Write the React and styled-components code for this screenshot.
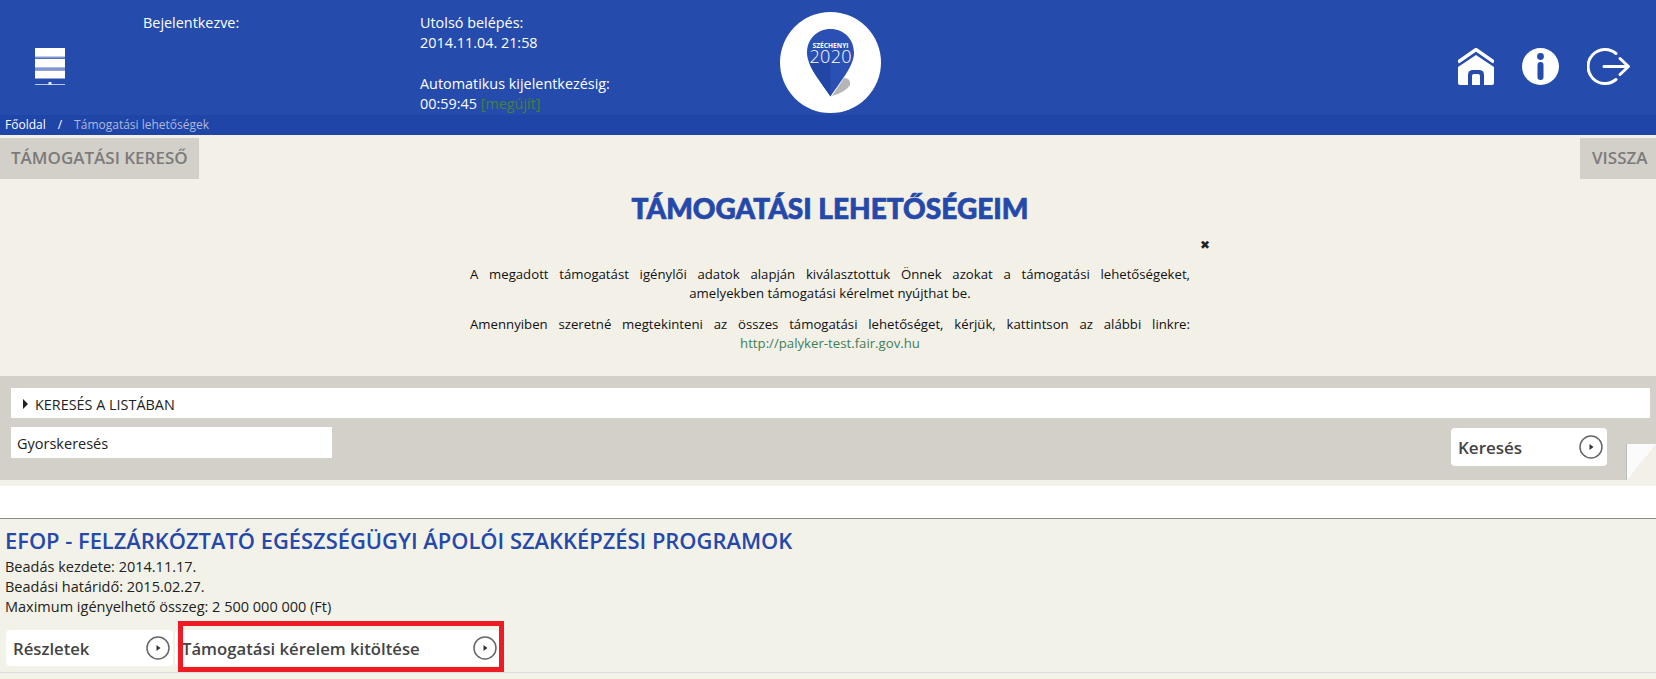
import styled, { createGlobalStyle } from "styled-components";

const GlobalStyle = createGlobalStyle`
  html, body {
    margin: 0;
    padding: 0;
    background: #f3f2e8;
    font-family: "Open Sans", "Liberation Sans", sans-serif;
    overflow: hidden;
  }
`;

const ArrowCircle = () => (
  <ArrowSvg viewBox="0 0 24 24">
    <circle cx="12" cy="12" r="11" fill="#fff" stroke="#666" strokeWidth="1.5" />
    <path d="M10.5 9 L14.5 12 L10.5 15 Z" fill="#333" />
  </ArrowSvg>
);

const MenuIcon = () => (
  <svg width="30" height="37" viewBox="0 0 30 37">
    <rect x="0" y="8" width="30" height="2.5" fill="#7f96d0" />
    <rect x="0" y="19.5" width="30" height="2.5" fill="#7f96d0" />
    <rect x="0" y="0" width="30" height="8.5" fill="#fff" />
    <rect x="0" y="11" width="30" height="8.5" fill="#fff" />
    <rect x="0" y="22.5" width="30" height="8" fill="#fff" />
    <rect x="0" y="36" width="30" height="1" fill="#b9c6e6" />
    <rect x="13.5" y="34" width="3" height="3" fill="#e6ebf7" />
  </svg>
);

const Logo = () => (
  <svg width="101" height="101" viewBox="0 0 101 101">
    <circle cx="50.5" cy="50.5" r="50.5" fill="#fff" />
    <path d="M52 84 L64 66 Q71 66 70 73 Q66 80 52 84 Z" fill="#b5b5b5" />
    <path d="M50.5 17 C37 17 27 27 27 41 C27 54 41 70 50.5 84.5 C60 70 74 54 74 41 C74 27 64 17 50.5 17 Z" fill="#2a50b4" />
    <path d="M50.5 50 L50.5 84.5 C41 70 32 60 29 50 Z" fill="#2146a6" />
    <text x="50.5" y="35.5" textAnchor="middle" fontFamily="Open Sans" fontWeight="700" fontSize="6.6" textLength="36" fill="#fff">SZÉCHENYI</text>
    <text x="50.5" y="51" textAnchor="middle" fontFamily="Open Sans" fontWeight="300" fontSize="18" textLength="42" fill="#fff">2020</text>
  </svg>
);

const HomeIcon = () => (
  <svg width="36" height="37" viewBox="0 0 36 37">
    <path d="M0 14 L18 1.5 L36 14" fill="none" stroke="#fff" strokeWidth="3.4" />
    <path d="M18 7 L36 19 V35 Q36 37 34 37 H26 V27 Q26 22 21 22 H15 Q10 22 10 27 V37 H2 Q0 37 0 35 V19 Z" fill="#fff" />
    <path d="M14 37 V28 Q14 26 16 26 H20 Q22 26 22 28 V37 Z" fill="#fff" />
  </svg>
);

const InfoIcon = () => (
  <svg width="37" height="37" viewBox="0 0 37 37">
    <circle cx="18.5" cy="18.5" r="18.5" fill="#fff" />
    <circle cx="18.5" cy="8.5" r="3.4" fill="#254bac" />
    <rect x="15.5" y="14" width="6" height="18" rx="3" fill="#254bac" />
  </svg>
);

const ExitIcon = () => (
  <svg width="44" height="37" viewBox="0 0 44 37" fill="none" stroke="#fff" strokeWidth="3">
    <path d="M29 5.5 A17 17 0 1 0 29 31.5" strokeLinecap="round" />
    <path d="M17 18.5 H41 M33 10.5 L41.5 18.5 L33 26.5" strokeLinecap="round" strokeLinejoin="round" />
  </svg>
);

const App = () => {
  return (
    <>
      <GlobalStyle />
      <Page>
        <Header>
          <MenuCell><MenuIcon /></MenuCell>
          <LoginCell>Bejelentkezve:</LoginCell>
          <SessionCell>
            <div>Utolsó belépés:</div>
            <div>2014.11.04. 21:58</div>
            <Gap />
            <div>Automatikus kijelentkezésig:</div>
            <div>00:59:45 <Renew>[megújít]</Renew></div>
          </SessionCell>
          <LogoCell><Logo /></LogoCell>
          <Actions>
            <HomeIcon />
            <InfoIcon />
            <ExitIcon />
          </Actions>
        </Header>
        <Breadcrumb>
          <CrumbLink>Főoldal</CrumbLink>
          <CrumbSep>/</CrumbSep>
          <CrumbCurrent>Támogatási lehetőségek</CrumbCurrent>
        </Breadcrumb>

        <Intro>
          <Tabs>
            <Tab>TÁMOGATÁSI KERESŐ</Tab>
            <Tab $small>VISSZA</Tab>
          </Tabs>
          <Heading>TÁMOGATÁSI LEHETŐSÉGEIM</Heading>
          <Notice>
            <Close>✖</Close>
            <NoticeLine $full>A megadott támogatást igénylői adatok alapján kiválasztottuk Önnek azokat a támogatási lehetőségeket,</NoticeLine>
            <NoticeLine>amelyekben támogatási kérelmet nyújthat be.</NoticeLine>
            <NoticeLine $full $spaced>Amennyiben szeretné megtekinteni az összes támogatási lehetőséget, kérjük, kattintson az alábbi linkre:</NoticeLine>
            <NoticeLine><NoticeLink>http://palyker-test.fair.gov.hu</NoticeLink></NoticeLine>
          </Notice>
        </Intro>

        <SearchPanel>
          <SearchToggle><Triangle />KERESÉS A LISTÁBAN</SearchToggle>
          <SearchRow>
            <QuickSearch>Gyorskeresés</QuickSearch>
            <SearchButton>Keresés<ArrowCircle /></SearchButton>
          </SearchRow>
          <Fold />
        </SearchPanel>
        <WhiteStrip />

        <Result>
          <ResultTitle>EFOP - FELZÁRKÓZTATÓ EGÉSZSÉGÜGYI ÁPOLÓI SZAKKÉPZÉSI PROGRAMOK</ResultTitle>
          <Meta>Beadás kezdete: 2014.11.17.</Meta>
          <Meta>Beadási határidő: 2015.02.27.</Meta>
          <Meta>Maximum igényelhető összeg: 2 500 000 000 (Ft)</Meta>
          <ButtonRow>
            <ActionButton $width={167}>Részletek<ArrowCircle /></ActionButton>
            <ActionButton $width={325}>Támogatási kérelem kitöltése<ArrowCircle /></ActionButton>
            <Highlight />
          </ButtonRow>
        </Result>
      </Page>
    </>
  );
};

export default App;

const Page = styled.div`
  width: 1656px;
  height: 679px;
  overflow: hidden;
  color: #222;
`;

const Header = styled.header`
  height: 115px;
  background: #254bac;
  color: #fff;
  font-size: 14.4px;
  line-height: 20px;
  display: flex;
`;

const MenuCell = styled.div`
  width: 143px;
  padding: 48px 0 0 35px;
  box-sizing: border-box;
`;

const LoginCell = styled.div`
  width: 277px;
  padding-top: 13px;
`;

const SessionCell = styled.div`
  width: 360px;
  padding-top: 13px;
`;

const Gap = styled.div`
  height: 21px;
`;

const Renew = styled.span`
  color: #47803c;
`;

const LogoCell = styled.div`
  padding-top: 12px;
`;

const Actions = styled.div`
  margin-left: auto;
  padding: 48px 25px 0 0;
  display: flex;
  align-items: flex-start;
  gap: 28px;
`;

const Breadcrumb = styled.nav`
  height: 20px;
  background: #2045a8;
  font-size: 12px;
  line-height: 20px;
  padding-left: 5px;
  display: flex;
`;

const CrumbLink = styled.span`
  color: #fff;
`;

const CrumbSep = styled.span`
  color: #fff;
  margin: 0 12px;
`;

const CrumbCurrent = styled.span`
  color: #aeb9d8;
`;

const Intro = styled.section`
  height: 241px;
  background: #f3f0e8;
  padding-top: 3px;
  box-sizing: border-box;
`;

const Tabs = styled.div`
  display: flex;
  justify-content: space-between;
`;

const Tab = styled.div`
  height: 41px;
  line-height: 39px;
  background: #d3d0c9;
  color: #7b7b7b;
  font-size: 17px;
  font-weight: 600;
  padding: ${(p) => (p.$small ? "0 0 0 12px" : "0 11px")};
  width: ${(p) => (p.$small ? "76px" : "auto")};
  box-sizing: ${(p) => (p.$small ? "border-box" : "content-box")};
  white-space: nowrap;
  overflow: hidden;
`;

const Heading = styled.h1`
  margin: 11px 0 0;
  padding-left: 4px;
  text-align: center;
  font-family: "Lato", "Liberation Sans", sans-serif;
  font-weight: 900;
  font-size: 28px;
  line-height: 36px;
  color: #2549ab;
  -webkit-text-stroke: 0.7px #2549ab;
`;

const Notice = styled.div`
  position: relative;
  width: 720px;
  margin: 14px auto 0 470px;
  padding-top: 25px;
  font-size: 13.2px;
  line-height: 19px;
  color: #111;
`;

const Close = styled.span`
  position: absolute;
  right: -20px;
  top: -2px;
  font-size: 12px;
  line-height: 14px;
  color: #222;
`;

const NoticeLine = styled.div`
  margin-top: ${(p) => (p.$spaced ? "12px" : "0")};
  text-align: ${(p) => (p.$full ? "justify" : "center")};
  text-align-last: ${(p) => (p.$full ? "justify" : "center")};
`;

const NoticeLink = styled.a`
  color: #3f7f56;
`;

const SearchPanel = styled.section`
  position: relative;
  height: 104px;
  background: #d3d0c9;
  padding: 12px 6px 0 11px;
  box-sizing: border-box;
`;

const SearchToggle = styled.div`
  height: 30px;
  background: #fff;
  font-size: 14.4px;
  color: #222;
  display: flex;
  align-items: center;
  padding: 2px 0 0 12px;
  box-sizing: border-box;
`;

const Triangle = styled.span`
  width: 0;
  height: 0;
  border-left: 5px solid #222;
  border-top: 5px solid transparent;
  border-bottom: 5px solid transparent;
  margin-right: 7px;
`;

const SearchRow = styled.div`
  display: flex;
  justify-content: space-between;
  align-items: flex-start;
  margin-top: 9px;
  padding-right: 43px;
`;

const QuickSearch = styled.div`
  width: 321px;
  height: 31px;
  line-height: 33px;
  background: #fff;
  font-size: 14.5px;
  color: #222;
  padding-left: 6px;
  box-sizing: border-box;
`;

const SearchButton = styled.div`
  width: 156px;
  height: 38px;
  margin-top: 1px;
  background: #fff;
  border-radius: 4px;
  font-size: 17px;
  font-weight: 600;
  color: #444;
  display: flex;
  align-items: center;
  justify-content: space-between;
  padding: 0 4px 0 7px;
  box-sizing: border-box;
`;

const ArrowSvg = styled.svg`
  width: 24px;
  height: 24px;
`;

const Fold = styled.div`
  position: absolute;
  right: 0;
  bottom: 0;
  width: 30px;
  height: 36px;
  background: linear-gradient(to bottom right, #fbfbfb 50%, #f3f0e8 50%);
  border-left: 1px solid #bbb;
  box-sizing: border-box;
`;

const WhiteStrip = styled.div`
  margin-top: 6px;
  height: 32px;
  background: #fff;
  border-bottom: 1px solid #8a8a8a;
`;

const Result = styled.section`
  background: #f3f2e8;
  padding: 6px 0 0 5px;
  height: 154px;
  box-sizing: border-box;
`;

const ResultTitle = styled.h2`
  margin: 1px 0 1px;
  font-size: 21.9px;
  line-height: 30px;
  font-weight: 600;
  color: #2549ab;
  white-space: nowrap;
`;

const Meta = styled.div`
  font-size: 14.5px;
  line-height: 20px;
  color: #222;
`;

const ButtonRow = styled.div`
  position: relative;
  display: flex;
  gap: 2px;
  margin: 13px 0 0 -5px;
  padding: 0 0 6px 6px;
  border-bottom: 1px solid #ddd;
`;

const ActionButton = styled.div`
  width: ${(p) => p.$width}px;
  height: 36px;
  background: #fff;
  border-radius: 4px;
  font-size: 16.7px;
  font-weight: 600;
  color: #444;
  display: flex;
  align-items: center;
  justify-content: space-between;
  padding: 0 3px 0 7px;
  box-sizing: border-box;
`;

const Highlight = styled.div`
  position: absolute;
  left: 178px;
  top: -9px;
  width: 326px;
  height: 51px;
  border: 5px solid #ed1c24;
  box-sizing: border-box;
`;
